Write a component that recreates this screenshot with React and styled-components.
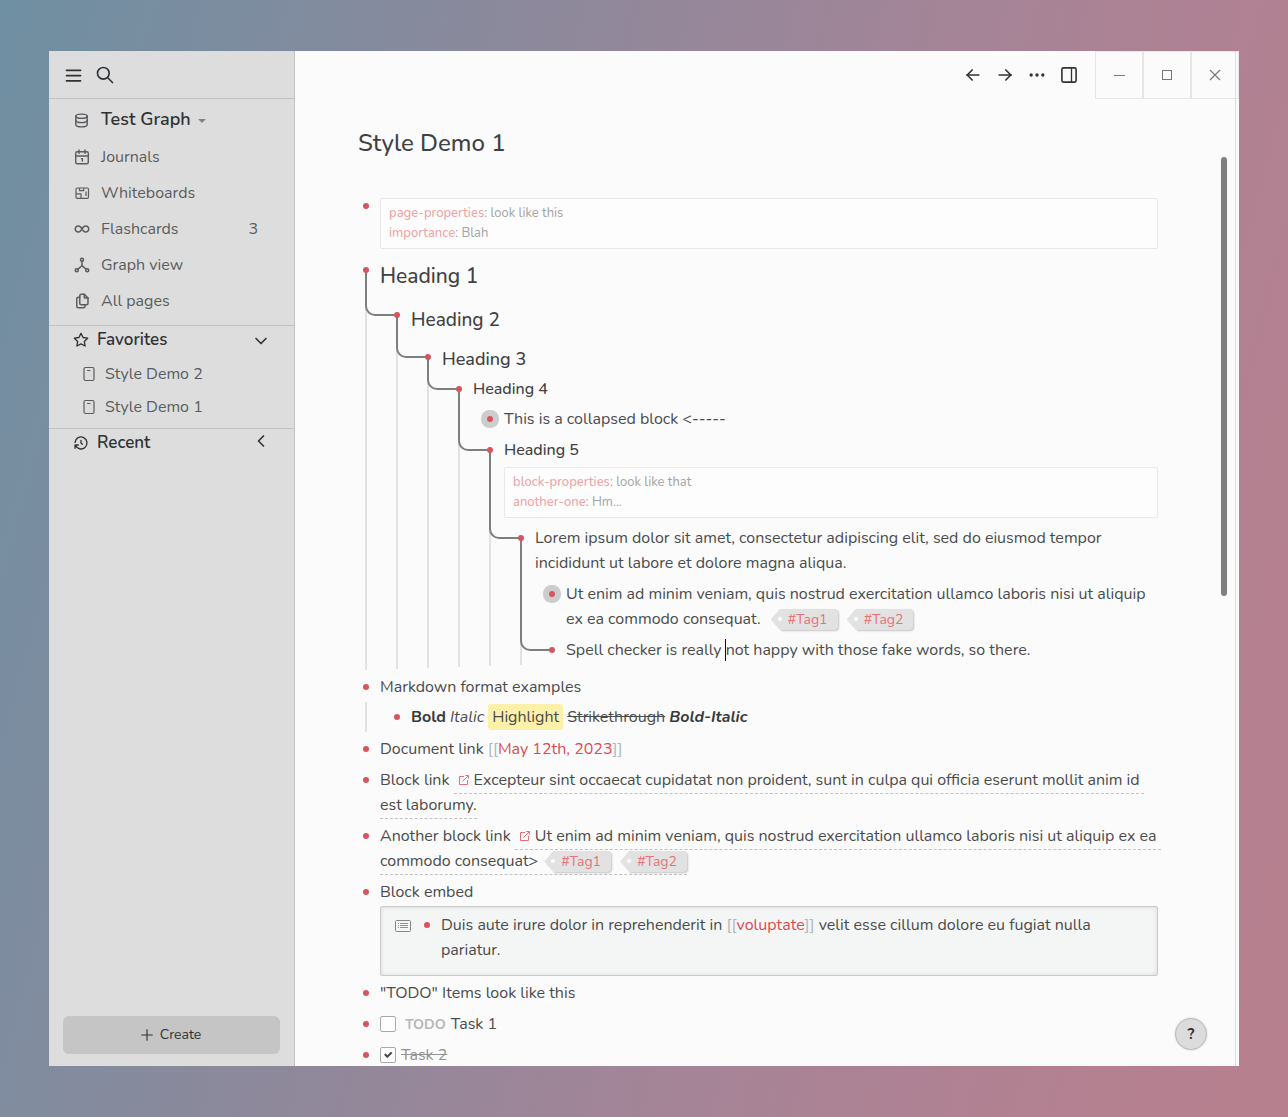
import React from "react";
import styled, { createGlobalStyle, css } from "styled-components";
import {
  TbArrowLeft,
  TbArrowRight,
  TbChevronDown,
  TbChevronLeft,
  TbDatabase,
  TbDots,
  TbFiles,
  TbHierarchy,
  TbHistory,
  TbInfinity,
  TbMenu2,
  TbPlus,
  TbSearch,
  TbStar,
} from "react-icons/tb";

const color = {
  text: "#4a4c4d",
  strong: "#2f3336",
  red: "#d9535f",
  link: "#e04a52",
  page: "#fbfbfb",
  side: "#dddddd",
  sideLine: "#c2c2c2",
  guide: "#e2e2e2",
  thread: "#7d7e7e",
};

const GlobalStyle = createGlobalStyle`
  *, *::before, *::after { box-sizing: border-box; }
  body {
    margin: 0;
    font-family: Nunito, Roboto, "Liberation Sans", sans-serif;
    font-size: 16px;
    color: ${color.text};
  }
  button { font: inherit; color: inherit; border: 0; background: none; padding: 0; cursor: pointer; }
  a { color: inherit; text-decoration: none; }
  h1, h2, h3, h4, h5, p, ul { margin: 0; padding: 0; font-weight: 500; }
  ul { list-style: none; font-weight: 400; }
  b { color: #38393a; }
`;

const Desktop = styled.div`
  height: 100vh;
  padding: 51px 49px;
  display: flex;
  background: linear-gradient(105deg, #6f8fa2 0%, #a48497 60%, #b08192 80%, #b8808e 100%);
`;

const Window = styled.div`
  position: relative;
  flex: 1;
  display: flex;
  min-width: 0;
  overflow: hidden;
  background: ${color.page};
`;

/* ---------- sidebar ---------- */

const Sidebar = styled.aside`
  width: 246px;
  flex: none;
  display: flex;
  flex-direction: column;
  background: ${color.side};
  border-right: 1px solid ${color.sideLine};
`;

const SideHeader = styled.header`
  height: 48px;
  padding-left: 8px;
  display: flex;
  border-bottom: 1px solid ${color.sideLine};
`;

const IconButton = styled.button`
  width: 32px;
  height: 48px;
  display: flex;
  align-items: center;
  justify-content: center;
  color: ${color.strong};
`;

const GraphButton = styled.button`
  height: 40px;
  padding: 0 24px;
  display: flex;
  align-items: center;
  gap: 12px;
  font-size: 18px;
  font-weight: 600;
  color: ${color.strong};
  svg { flex: none; }
`;

const GraphIcon = styled.span`
  width: 16px;
  display: flex;
  padding-top: 3px;
  color: #55585b;
`;

const Caret = styled.span`
  margin: 4px 0 0 -5px;
  border: 4px solid transparent;
  border-top-color: #7c8494;
  border-bottom: 0;
`;

const Nav = styled.nav`
  padding-bottom: 6px;
  border-bottom: 1px solid ${color.sideLine};
`;

const NavLink = styled.a`
  height: 36px;
  padding: 0 36px 0 24px;
  display: flex;
  align-items: center;
  gap: 10px;
  color: #5a5d5f;
  svg { flex: none; }
`;

const Count = styled.span`
  margin-left: auto;
`;

const Section = styled.section`
  padding-bottom: ${(p) => (p.$open ? "5px" : "0")};
  border-bottom: ${(p) => (p.$open ? `1px solid ${color.sideLine}` : "0")};
`;

const SectionButton = styled.button`
  width: 100%;
  height: 27px;
  padding: 0 23px 0 24px;
  display: flex;
  align-items: center;
  gap: 8px;
  font-size: 17px;
  font-weight: 600;
  color: ${color.strong};
  svg { flex: none; margin-top: 1px; }
  svg:last-child { margin-left: auto; margin-top: ${(p) => (p.$open ? "3px" : "-3px")}; }
`;

const FavList = styled.ul`
  padding-top: 4px;
`;

const FavLink = styled.a`
  height: 33px;
  padding-left: 32px;
  display: flex;
  align-items: center;
  gap: 8px;
  color: #5a5d5f;
`;

const SideFooter = styled.footer`
  margin-top: auto;
  padding: 0 14px 12px;
`;

const CreateButton = styled.button`
  width: 100%;
  height: 38px;
  padding: 0 4px 1px 0;
  display: flex;
  align-items: center;
  justify-content: center;
  gap: 4px;
  border-radius: 6px;
  background: #c5c5c5;
  font-size: 14px;
  color: ${color.strong};
`;

/* ---------- main ---------- */

const Main = styled.main`
  position: relative;
  flex: 1;
  min-width: 0;
  display: flex;
  flex-direction: column;

  &::after {
    content: "";
    position: absolute;
    top: 0;
    bottom: 0;
    right: 3px;
    border-left: 1px solid #dcdcdc;
  }
`;

const TopBar = styled.header`
  flex: none;
  height: 48px;
  display: flex;
  justify-content: flex-end;
`;

const WindowControls = styled.div`
  margin-left: 10px;
  display: flex;
`;

const ControlButton = styled.button`
  width: 48px;
  height: 48px;
  display: flex;
  align-items: center;
  justify-content: center;
  border: 1px solid #e6e6e6;
  color: #777;
`;

const Scroller = styled.div`
  flex: 1;
  min-height: 0;
  overflow: hidden;
  display: flex;
  padding-right: 12px;
`;

const PageArea = styled.div`
  flex: 1;
  min-width: 0;
  padding-top: 28px;
`;

const Page = styled.article`
  max-width: 800px;
  margin: 0 auto;
`;

const ScrollThumb = styled.div`
  flex: none;
  width: 6px;
  height: 439px;
  margin-top: 58px;
  border-radius: 3px;
  background: #7e8080;
`;

const PageTitle = styled.h1`
  margin-bottom: 32px;
  font-size: 24px;
  line-height: 32px;
  color: #404142;
`;

/* ---------- outline ---------- */

const BlockItem = styled.li`
  position: relative;
`;

const BlockRow = styled.div`
  display: flex;
`;

const BulletCell = styled.span`
  flex: none;
  width: 22px;
  padding: ${(p) => p.$y - 3}px 0 0 5px;
`;

const Bullet = styled.span`
  position: relative;
  z-index: 2;
  display: block;
  width: 6px;
  height: 6px;
  border-radius: 50%;
  background: ${color.red};
  box-shadow: ${(p) => (p.$collapsed ? "0 0 0 6px #cccece" : "none")};
`;

const Content = styled.div`
  flex: 1;
  min-width: 0;
  padding: 3px 0 ${(p) => (p.$tight ? "2px" : "3px")};
  line-height: 25px;
`;

const Heading = styled.div`
  margin: -3px 0;
  color: #404142;
  ${(p) =>
    ({
      1: css`font-size: 21px; line-height: 45px;`,
      2: css`font-size: 19px; line-height: 42px; padding-bottom: 4px;`,
      3: css`font-size: 18px; line-height: 29px;`,
      4: css`font-size: 16px; line-height: 31px;`,
      5: css`font-size: 16px; line-height: 31px;`,
    })[p.$level]}
`;

const Children = styled.ul`
  position: relative;
  margin-left: 31px;
  padding-bottom: 1px;

  &::before {
    content: "";
    position: absolute;
    top: 0;
    bottom: 2px;
    left: -24px;
    width: 2px;
    background: ${color.guide};
  }
`;

const Thread = styled.span`
  position: absolute;
  z-index: 1;
  left: -24px;
  top: ${(p) => p.$y + 1 - p.$rise}px;
  width: 32px;
  height: ${(p) => p.$rise}px;
  border: solid ${color.thread};
  border-width: 0 0 2px 2px;
  border-bottom-left-radius: 10px;
`;

const PropBox = styled.div`
  margin: 4px 0 2px;
  padding: 4px 8px 5px;
  border: 1px solid #e8e8e8;
  border-radius: 2px;
  background: #fdfdfd;
  font-size: 13px;
  line-height: 20px;
  color: #a3a4a4;
`;

const PropKey = styled.a`
  font-weight: 500;
  color: #efa5a8;
`;

const Tag = styled.a`
  position: relative;
  display: inline-block;
  height: 21px;
  margin: 0 0 0 ${(p) => (p.$first ? "15px" : "14px")};
  padding: 0 10px 0 8px;
  border-radius: 0 4px 4px 0;
  background: #e2e2e2;
  box-shadow: 1px 1px 2px rgba(0, 0, 0, 0.22);
  font-size: 14px;
  line-height: 21px;
  color: #e57378;

  &::before {
    content: "";
    position: absolute;
    top: 0;
    left: -9px;
    width: 10px;
    height: 21px;
    background: #e2e2e2;
    clip-path: polygon(0 50%, 90% 0, 100% 0, 100% 100%, 90% 100%);
  }

  &::after {
    content: "";
    position: absolute;
    top: 8px;
    left: -2px;
    width: 4px;
    height: 4px;
    border-radius: 50%;
    background: #fff;
  }
`;

const Cursor = styled.span`
  display: inline-block;
  width: 1px;
  height: 22px;
  margin: 0 0 0 -1px;
  vertical-align: -6px;
  background: #111;
`;

const Mark = styled.mark`
  padding: 2px 4px;
  border-radius: 3px;
  background: #fdf1a9;
  color: inherit;
`;

const Bracket = styled.span`
  color: #b4b5b5;
`;

const PageLink = styled.a`
  color: ${color.link};
`;

const BlockRef = styled.span`
  padding: 0 0 2px 5px;
  border-bottom: 1px dashed #c2c2c2;
  white-space: pre-wrap;
  svg { margin-right: 5px; vertical-align: 0; color: #e27076; }
`;

const Embed = styled.div`
  height: 70px;
  margin: 1px 0 -1px;
  padding: 3px 14px 0;
  display: flex;
  gap: 8px;
  border: 1px solid #c9cbcb;
  border-radius: 2px;
  background: #f4f6f5;
  box-shadow: inset 0 0 4px rgba(0, 0, 0, 0.12);
  > svg { flex: none; margin-top: 10px; }
  > ul { flex: 1; }
`;

const Task = styled.label`
  display: flex;
  align-items: center;
  gap: 5px;
  text-decoration: ${(p) => (p.$done ? "line-through" : "none")};
  color: ${(p) => (p.$done ? "#929393" : "inherit")};
`;

const Check = styled.input`
  appearance: none;
  width: 16px;
  height: 16px;
  margin: 0 0 2px;
  border: 1px solid #a9a9a9;
  border-radius: 2px;
  background: #fff;

  &:checked::before {
    content: "";
    display: block;
    width: 14px;
    height: 14px;
    background: #444;
    clip-path: polygon(22% 52%, 33% 42%, 46% 55%, 70% 30%, 82% 40%, 48% 74%, 42% 74%);
  }
`;

const Marker = styled.strong`
  margin-left: 4px;
  font-size: 14px;
  font-weight: 700;
  color: #b7b8b8;
`;

const HelpButton = styled.button`
  position: absolute;
  z-index: 3;
  right: 32px;
  bottom: 16px;
  width: 32px;
  height: 32px;
  border: 1px solid #bdbdbd;
  border-radius: 50%;
  background: #dcdcdc;
  box-shadow: 0 0 2px rgba(0, 0, 0, 0.2);
  font-size: 15px;
  font-weight: 700;
  line-height: 28px;
  color: ${color.strong};
`;

/* ---------- icons ---------- */

const CalendarIcon = () => (
  <svg width="18" height="18" viewBox="0 0 18 18" fill="none" stroke="currentColor" strokeWidth="1.4" strokeLinecap="round" strokeLinejoin="round" aria-hidden="true">
    <rect x="2.700" y="3.700" width="12.600" height="12" rx="1.500" />
    <path d="M6 2v3.400M12 2v3.400M2.700 8h12.600M8.500 10.700h0.900v2.300" />
  </svg>
);

const WhiteboardIcon = () => (
  <svg width="18" height="18" viewBox="0 0 18 18" fill="none" stroke="currentColor" strokeWidth="1.2" strokeLinejoin="round" aria-hidden="true">
    <rect x="3" y="4" width="12.500" height="10.400" rx="1.300" />
    <path d="M6.500 4v2.600h4.200V4M3 9.800h5v4.400M13 7.500v4.500" />
  </svg>
);

const PanelIcon = () => (
  <svg width="16" height="16" viewBox="0 0 16 16" fill="none" stroke="currentColor" aria-hidden="true">
    <rect x="0.900" y="0.900" width="14.200" height="14.200" rx="1.500" strokeWidth="1.600" />
    <path d="M10.500 1v14" strokeWidth="1.300" />
  </svg>
);

const PageIcon = () => (
  <svg width="16" height="16" viewBox="0 0 16 16" fill="none" stroke="currentColor" strokeWidth="1.200" strokeLinecap="round" aria-hidden="true">
    <rect x="3" y="1.500" width="10" height="13" rx="1.500" />
    <path d="M6.500 4.500h2.500" />
  </svg>
);

const RefIcon = () => (
  <svg width="10" height="10" viewBox="0 0 10 10" fill="none" stroke="currentColor" aria-hidden="true">
    <path d="M5 1.500H0.500v8h8V5M3.500 6.500L9.300 0.700M6.300 0.500h3.200v3.200" />
  </svg>
);

const ListIcon = () => (
  <svg width="16" height="12" viewBox="0 0 16 12" fill="none" stroke="#858888" aria-hidden="true">
    <rect x="0.500" y="0.500" width="15" height="11" rx="1" />
    <path d="M3 3.500h1M5 3.500h8M3 5.500h1M5 5.500h8M3 7.500h1M5 7.500h8" strokeWidth="0.900" />
  </svg>
);

const MinimizeIcon = () => (
  <svg width="11" height="11" viewBox="0 0 11 11" stroke="currentColor" aria-hidden="true"><path d="M0 5.500h11" /></svg>
);
const MaximizeIcon = () => (
  <svg width="10" height="10" viewBox="0 0 10 10" fill="none" stroke="currentColor" aria-hidden="true"><rect x="0.500" y="0.500" width="9" height="9" /></svg>
);
const CloseIcon = () => (
  <svg width="12" height="12" viewBox="0 0 12 12" stroke="currentColor" strokeWidth="1.200" aria-hidden="true"><path d="M1 1l10 10M11 1L1 11" /></svg>
);

/* ---------- composition ---------- */

/* y: distance from the block's top to its bullet centre; rise: thread length up to the parent bullet */
function Block({ y = 15, rise, collapsed, tight, children, nested }) {
  return (
    <BlockItem>
      {rise && <Thread $y={y} $rise={rise} />}
      <BlockRow>
        <BulletCell $y={y}><Bullet $collapsed={collapsed} /></BulletCell>
        <Content $tight={tight}>{children}</Content>
      </BlockRow>
      {nested && <Children>{nested}</Children>}
    </BlockItem>
  );
}

function Props({ items }) {
  return (
    <PropBox>
      {items.map(([key, value]) => (
        <div key={key}><PropKey href="#">{key}</PropKey>: {value}</div>
      ))}
    </PropBox>
  );
}

function Outline() {
  return (
    <ul>
      <Block>
        <Props items={[["page-properties", "look like this"], ["importance", "Blah"]]} />
      </Block>
      <Block
        y={16}
        nested={
          <Block
            y={16}
            rise={45}
            nested={
              <Block
                y={12}
                rise={42}
                nested={
                  <Block
                    rise={32}
                    tight
                    nested={
                      <>
                        <Block collapsed>This is a collapsed block &lt;-----</Block>
                        <Block
                          rise={61}
                          nested={
                            <Block
                              rise={88}
                              nested={
                                <>
                                  <Block collapsed>
                                    Ut enim ad minim veniam, quis nostrud exercitation ullamco laboris nisi ut aliquip ex ea commodo consequat.{" "}
                                    <Tag href="#" $first>#Tag1</Tag> <Tag href="#">#Tag2</Tag>
                                  </Block>
                                  <Block rise={112}>
                                    Spell checker is really <Cursor />not happy with those fake words, so there.
                                  </Block>
                                </>
                              }
                            >
                              Lorem ipsum dolor sit amet, consectetur adipiscing elit, sed do eiusmod tempor incididunt ut labore et dolore magna aliqua.
                            </Block>
                          }
                        >
                          <Heading as="h5" $level={5}>Heading 5</Heading>
                          <Props items={[["block-properties", "look like that"], ["another-one", "Hm..."]]} />
                        </Block>
                      </>
                    }
                  >
                    <Heading as="h4" $level={4}>Heading 4</Heading>
                  </Block>
                }
              >
                <Heading as="h3" $level={3}>Heading 3</Heading>
              </Block>
            }
          >
            <Heading as="h2" $level={2}>Heading 2</Heading>
          </Block>
        }
      >
        <Heading as="h1" $level={1}>Heading 1</Heading>
      </Block>
      <Block
        tight
        nested={
          <Block>
            <b>Bold</b> <i>Italic</i> <Mark>Highlight</Mark> <s>Strikethrough</s> <b><i>Bold-Italic</i></b>
          </Block>
        }
      >
        Markdown format examples
      </Block>
      <Block>
        Document link <Bracket>[[</Bracket><PageLink href="#">May 12th, 2023</PageLink><Bracket>]]</Bracket>
      </Block>
      <Block>
        Block link{" "}
        <BlockRef><RefIcon />Excepteur sint occaecat cupidatat non proident, sunt in culpa qui officia eserunt mollit anim id est laborumy.</BlockRef>
      </Block>
      <Block>
        Another block link{" "}
        <BlockRef>
          <RefIcon />Ut enim ad minim veniam, quis nostrud exercitation ullamco laboris nisi ut aliquip ex ea commodo consequat&gt;<Tag href="#" $first>#Tag1</Tag>{" "}
          <Tag href="#">#Tag2</Tag>
        </BlockRef>
      </Block>
      <Block>
        Block embed
        <Embed>
          <ListIcon />
          <ul>
            <Block>
              Duis aute irure dolor in reprehenderit in <Bracket>[[</Bracket><PageLink href="#">voluptate</PageLink><Bracket>]]</Bracket> velit esse cillum dolore eu fugiat nulla pariatur.
            </Block>
          </ul>
        </Embed>
      </Block>
      <Block>"TODO" Items look like this</Block>
      <Block>
        <Task><Check type="checkbox" /><Marker>TODO</Marker>Task 1</Task>
      </Block>
      <Block>
        <Task $done><Check type="checkbox" defaultChecked />Task 2</Task>
      </Block>
    </ul>
  );
}

export default function App() {
  return (
    <Desktop>
      <GlobalStyle />
      <Window>
        <Sidebar>
          <SideHeader>
            <IconButton aria-label="Menu"><TbMenu2 size={21} /></IconButton>
            <IconButton aria-label="Search"><TbSearch size={20} /></IconButton>
          </SideHeader>
          <GraphButton>
            <GraphIcon><TbDatabase size={17} /></GraphIcon>
            Test Graph
            <Caret />
          </GraphButton>
          <Nav>
            <NavLink href="#"><CalendarIcon />Journals</NavLink>
            <NavLink href="#"><WhiteboardIcon />Whiteboards</NavLink>
            <NavLink href="#"><TbInfinity size={18} />Flashcards<Count>3</Count></NavLink>
            <NavLink href="#"><TbHierarchy size={18} />Graph view</NavLink>
            <NavLink href="#"><TbFiles size={18} />All pages</NavLink>
          </Nav>
          <Section $open>
            <SectionButton $open><TbStar size={16} />Favorites<TbChevronDown size={20} /></SectionButton>
            <FavList>
              <li><FavLink href="#"><PageIcon />Style Demo 2</FavLink></li>
              <li><FavLink href="#"><PageIcon />Style Demo 1</FavLink></li>
            </FavList>
          </Section>
          <Section>
            <SectionButton><TbHistory size={16} />Recent<TbChevronLeft size={20} /></SectionButton>
          </Section>
          <SideFooter>
            <CreateButton><TbPlus size={18} strokeWidth={1.5} />Create</CreateButton>
          </SideFooter>
        </Sidebar>
        <Main>
          <TopBar>
            <IconButton aria-label="Back"><TbArrowLeft size={20} /></IconButton>
            <IconButton aria-label="Forward"><TbArrowRight size={20} /></IconButton>
            <IconButton aria-label="More"><TbDots size={20} /></IconButton>
            <IconButton aria-label="Toggle right sidebar"><PanelIcon /></IconButton>
            <WindowControls>
              <ControlButton aria-label="Minimize"><MinimizeIcon /></ControlButton>
              <ControlButton aria-label="Maximize"><MaximizeIcon /></ControlButton>
              <ControlButton aria-label="Close"><CloseIcon /></ControlButton>
            </WindowControls>
          </TopBar>
          <Scroller>
            <PageArea>
              <Page>
                <PageTitle>Style Demo 1</PageTitle>
                <Outline />
              </Page>
            </PageArea>
            <ScrollThumb />
          </Scroller>
        </Main>
        <HelpButton aria-label="Help">?</HelpButton>
      </Window>
    </Desktop>
  );
}
